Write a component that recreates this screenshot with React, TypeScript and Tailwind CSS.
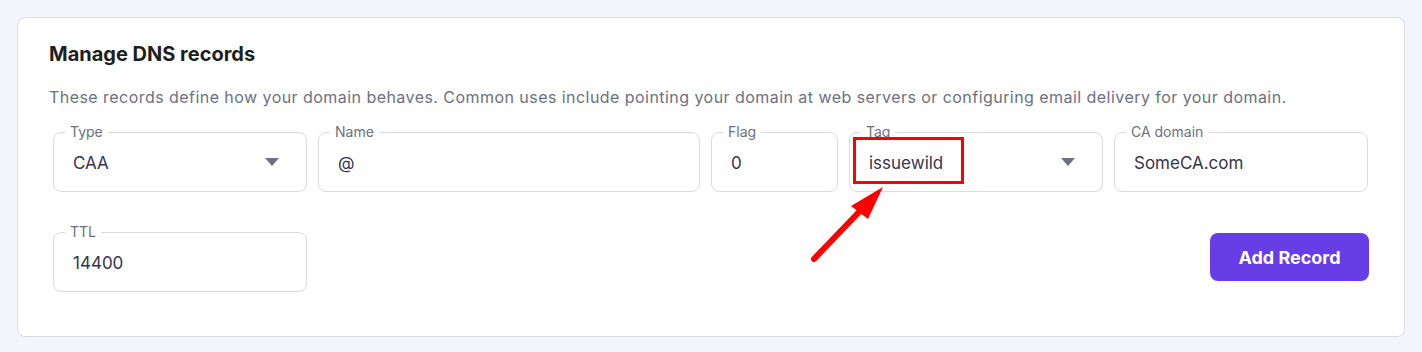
import { ReactNode } from 'react'

const font = { fontFamily: 'Inter, "Noto Sans", sans-serif' }

function Caret() {
  return (
    <svg width="14" height="8" viewBox="0 0 14 8" className="shrink-0">
      <path d="M0 0h14L7 8z" fill="#6d7081" />
    </svg>
  )
}

function Field({ label, value, width, select = false, children }: { label: string; value: string; width: string; select?: boolean; children?: ReactNode }) {
  return (
    <div className={`relative h-[60px] ${width} shrink-0 rounded-lg border border-[#dadce4] bg-white flex items-center pl-[19px] pr-[27px]`}>
      <span className="absolute -top-[10px] left-[11px] bg-white px-[5px] text-[14px] leading-[18px] text-[#6d7081]">{label}</span>
      <span className="flex-1 pt-[3px] text-[17px] text-[#36344d]">{value}</span>
      {select && <Caret />}
      {children}
    </div>
  )
}

export default function App() {
  return (
    <div className="min-h-[352px] bg-[#f4f4fd] p-[17px]" style={font}>
      <div className="rounded-lg border border-[#dadce4] bg-white px-[35px] pt-[22px] pb-[44px]">
        <h2 className="ml-[-4px] text-[20px] font-bold leading-[28px] text-[#1d1e20]">Manage DNS records</h2>
        <p className="ml-[-4px] mt-[17px] text-[16px] leading-[24px] tracking-[0.45px] text-[#6d7081]">
          These records define how your domain behaves. Common uses include pointing your domain at web servers or configuring email delivery for your domain.
        </p>
        <div className="mt-[23px] flex gap-[11px]">
          <Field label="Type" value="CAA" width="w-[254px]" select />
          <Field label="Name" value="@" width="w-[382px]" />
          <Field label="Flag" value="0" width="w-[127px]" />
          <Field label="Tag" value="issuewild" width="w-[254px]" select>
            <div className="absolute left-[3px] top-[4px] h-[47px] w-[111px] border-[3px] border-[#ff0000]" />
            <svg className="absolute left-[-44px] top-[50px] overflow-visible" width="90" height="84" viewBox="0 0 90 84">
              <path d="M8 76L54 28" stroke="#ff0000" strokeWidth="6" strokeLinecap="round" fill="none" />
              <path d="M77 4L45 23L62 36z" fill="#ff0000" />
            </svg>
          </Field>
          <Field label="CA domain" value="SomeCA.com" width="w-[254px]" />
        </div>
        <div className="mt-[40px] flex items-start justify-between">
          <Field label="TTL" value="14400" width="w-[254px]" />
          <button className="mt-[1px] h-[48px] w-[159px] rounded-lg bg-[#673de6] text-[18px] font-bold text-white">Add Record</button>
        </div>
      </div>
    </div>
  )
}
